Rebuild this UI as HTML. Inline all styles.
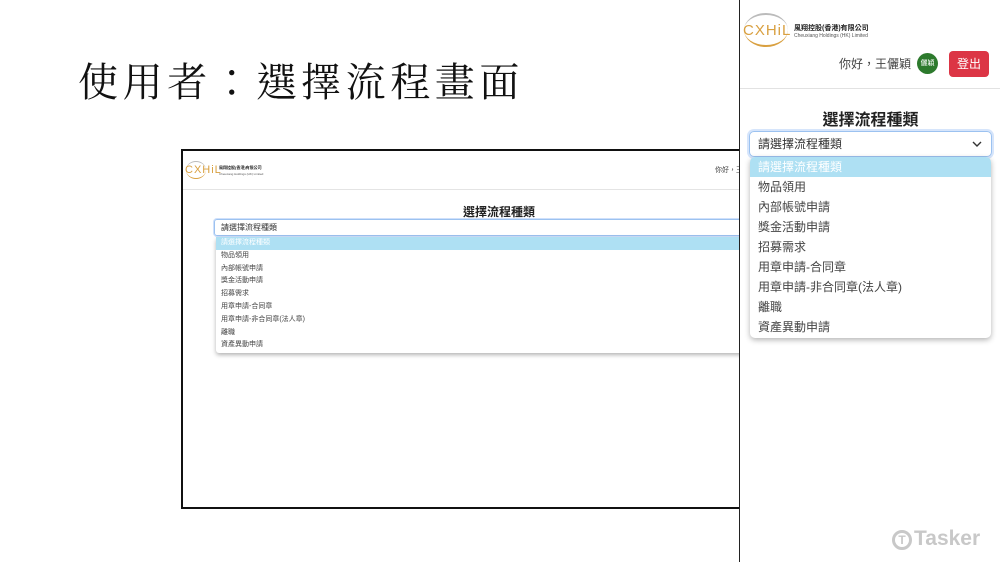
<!DOCTYPE html>
<html><head><meta charset="utf-8"><style>
*{margin:0;padding:0;box-sizing:border-box}
body{width:1000px;height:562px;background:#fff;position:relative;overflow:hidden;font-family:"Liberation Sans","Noto Sans CJK TC",sans-serif;color:#333}
.a{position:absolute}
.title{left:78px;top:58px;font-family:"Liberation Serif","Noto Serif CJK TC",serif;font-size:40px;letter-spacing:4.6px;color:#111;font-weight:400;white-space:nowrap;line-height:50px}
.frame{left:181px;top:149px;width:580px;height:360px;border:2px solid #111;background:#fff;overflow:hidden}
.logo-t{color:#d9a040;letter-spacing:1px}
.dd div{white-space:nowrap}
</style></head><body>
<div class="a title">使用者：選擇流程畫面</div>

<div class="a frame">
  <div class="a" style="left:0;top:8px;width:90px;height:22px">
    <div class="a" style="left:3px;top:2px;width:20px;height:18px;border-radius:50%;border-top:1px solid #bbb;border-bottom:1px solid #d9a040"></div>
    <div class="a logo-t" style="left:2px;top:5px;font-size:11px">CXHiL</div>
    <div class="a" style="left:36px;top:6px;font-size:4px;font-weight:bold;color:#222">風翔控股(香港)有限公司</div>
    <div class="a" style="left:36px;top:13px;font-size:3px;color:#555;white-space:nowrap">Cheuxiang Holdings (HK) Limited</div>
  </div>
  <div class="a" style="left:532px;top:14px;font-size:7px;color:#444">你好，王</div>
  <div class="a" style="left:0;top:38px;width:580px;height:1px;background:#e4e4e4"></div>
  <div class="a" style="left:280px;top:52px;font-size:12px;font-weight:bold;color:#222">選擇流程種類</div>
  <div class="a" style="left:31px;top:68px;width:560px;height:17px;border:1px solid #9cc2f0;border-radius:3px;box-shadow:0 0 0 1px #cfe0fb;font-size:8px;line-height:15px;padding-left:6px">請選擇流程種類</div>
  <div class="a dd" style="left:33px;top:86px;width:560px;height:116px;background:#fff;box-shadow:0 2px 4px rgba(0,0,0,.3);border-radius:3px;font-size:7px;line-height:12.8px;color:#444">
    <div style="background:#aee0f3;color:#fff;padding-left:5px">請選擇流程種類</div>
    <div style="padding-left:5px">物品領用</div><div style="padding-left:5px">內部帳號申請</div><div style="padding-left:5px">獎金活動申請</div><div style="padding-left:5px">招募需求</div><div style="padding-left:5px">用章申請-合同章</div><div style="padding-left:5px">用章申請-非合同章(法人章)</div><div style="padding-left:5px">離職</div><div style="padding-left:5px">資產異動申請</div>
  </div>
</div>

<div class="a" style="left:739px;top:0;width:261px;height:562px;background:#fff;border-left:1px solid #222">
  <div class="a" style="left:4px;top:13px;width:44px;height:34px;border-radius:50%;border-top:2px solid #bbb;border-bottom:2px solid #d9a040"></div>
  <div class="a logo-t" style="left:3px;top:22px;font-size:15px">CXHiL</div>
  <div class="a" style="left:54px;top:23px;font-size:7px;font-weight:bold;color:#222">風翔控股(香港)有限公司</div>
  <div class="a" style="left:54px;top:33px;font-size:5px;color:#555;white-space:nowrap">Cheuxiang Holdings (HK) Limited</div>
  <div class="a" style="left:99px;top:55px;font-size:12px;color:#444">你好，王儷穎</div>
  <div class="a" style="left:177px;top:53px;width:21px;height:21px;border-radius:50%;background:#2d7a2d;color:#fff;font-size:7px;line-height:21px;text-align:center">儷穎</div>
  <div class="a" style="left:209px;top:51px;width:40px;height:26px;border-radius:4px;background:#dc3545;color:#fff;font-size:12px;line-height:26px;text-align:center">登出</div>
  <div class="a" style="left:0;top:88px;width:261px;height:1px;background:#e2e2e2"></div>
  <div class="a" style="left:0;top:106px;width:261px;text-align:center;font-size:16px;font-weight:bold;color:#222">選擇流程種類</div>
  <div class="a" style="left:9px;top:131px;width:243px;height:26px;border:1px solid #9cc2f0;border-radius:5px;box-shadow:0 0 0 2px #d6e5fb;font-size:12px;line-height:24px;padding-left:8px;color:#333">請選擇流程種類
    <svg class="a" style="right:9px;top:8px" width="10" height="8" viewBox="0 0 10 8"><path d="M1 2l4 4 4-4" fill="none" stroke="#333" stroke-width="1.4"/></svg>
  </div>
  <div class="a dd" style="left:10px;top:157px;width:241px;height:181px;background:#fff;box-shadow:0 2px 6px rgba(0,0,0,.3);border-radius:5px;overflow:hidden;font-size:12px;line-height:20px;color:#444">
    <div style="background:#aee0f3;color:#fff;padding-left:8px">請選擇流程種類</div>
    <div style="padding-left:8px">物品領用</div><div style="padding-left:8px">內部帳號申請</div><div style="padding-left:8px">獎金活動申請</div><div style="padding-left:8px">招募需求</div><div style="padding-left:8px">用章申請-合同章</div><div style="padding-left:8px">用章申請-非合同章(法人章)</div><div style="padding-left:8px">離職</div><div style="padding-left:8px">資產異動申請</div>
  </div>
  <div class="a" style="left:152px;top:530px;width:20px;height:20px;border-radius:50%;border:3px solid #c8c8c8;color:#c8c8c8;font-size:12px;font-weight:bold;line-height:14px;text-align:center">T</div>
  <div class="a" style="left:174px;top:527px;font-size:21px;font-weight:bold;color:#c8c8c8">Tasker</div>
</div>
</body></html>
